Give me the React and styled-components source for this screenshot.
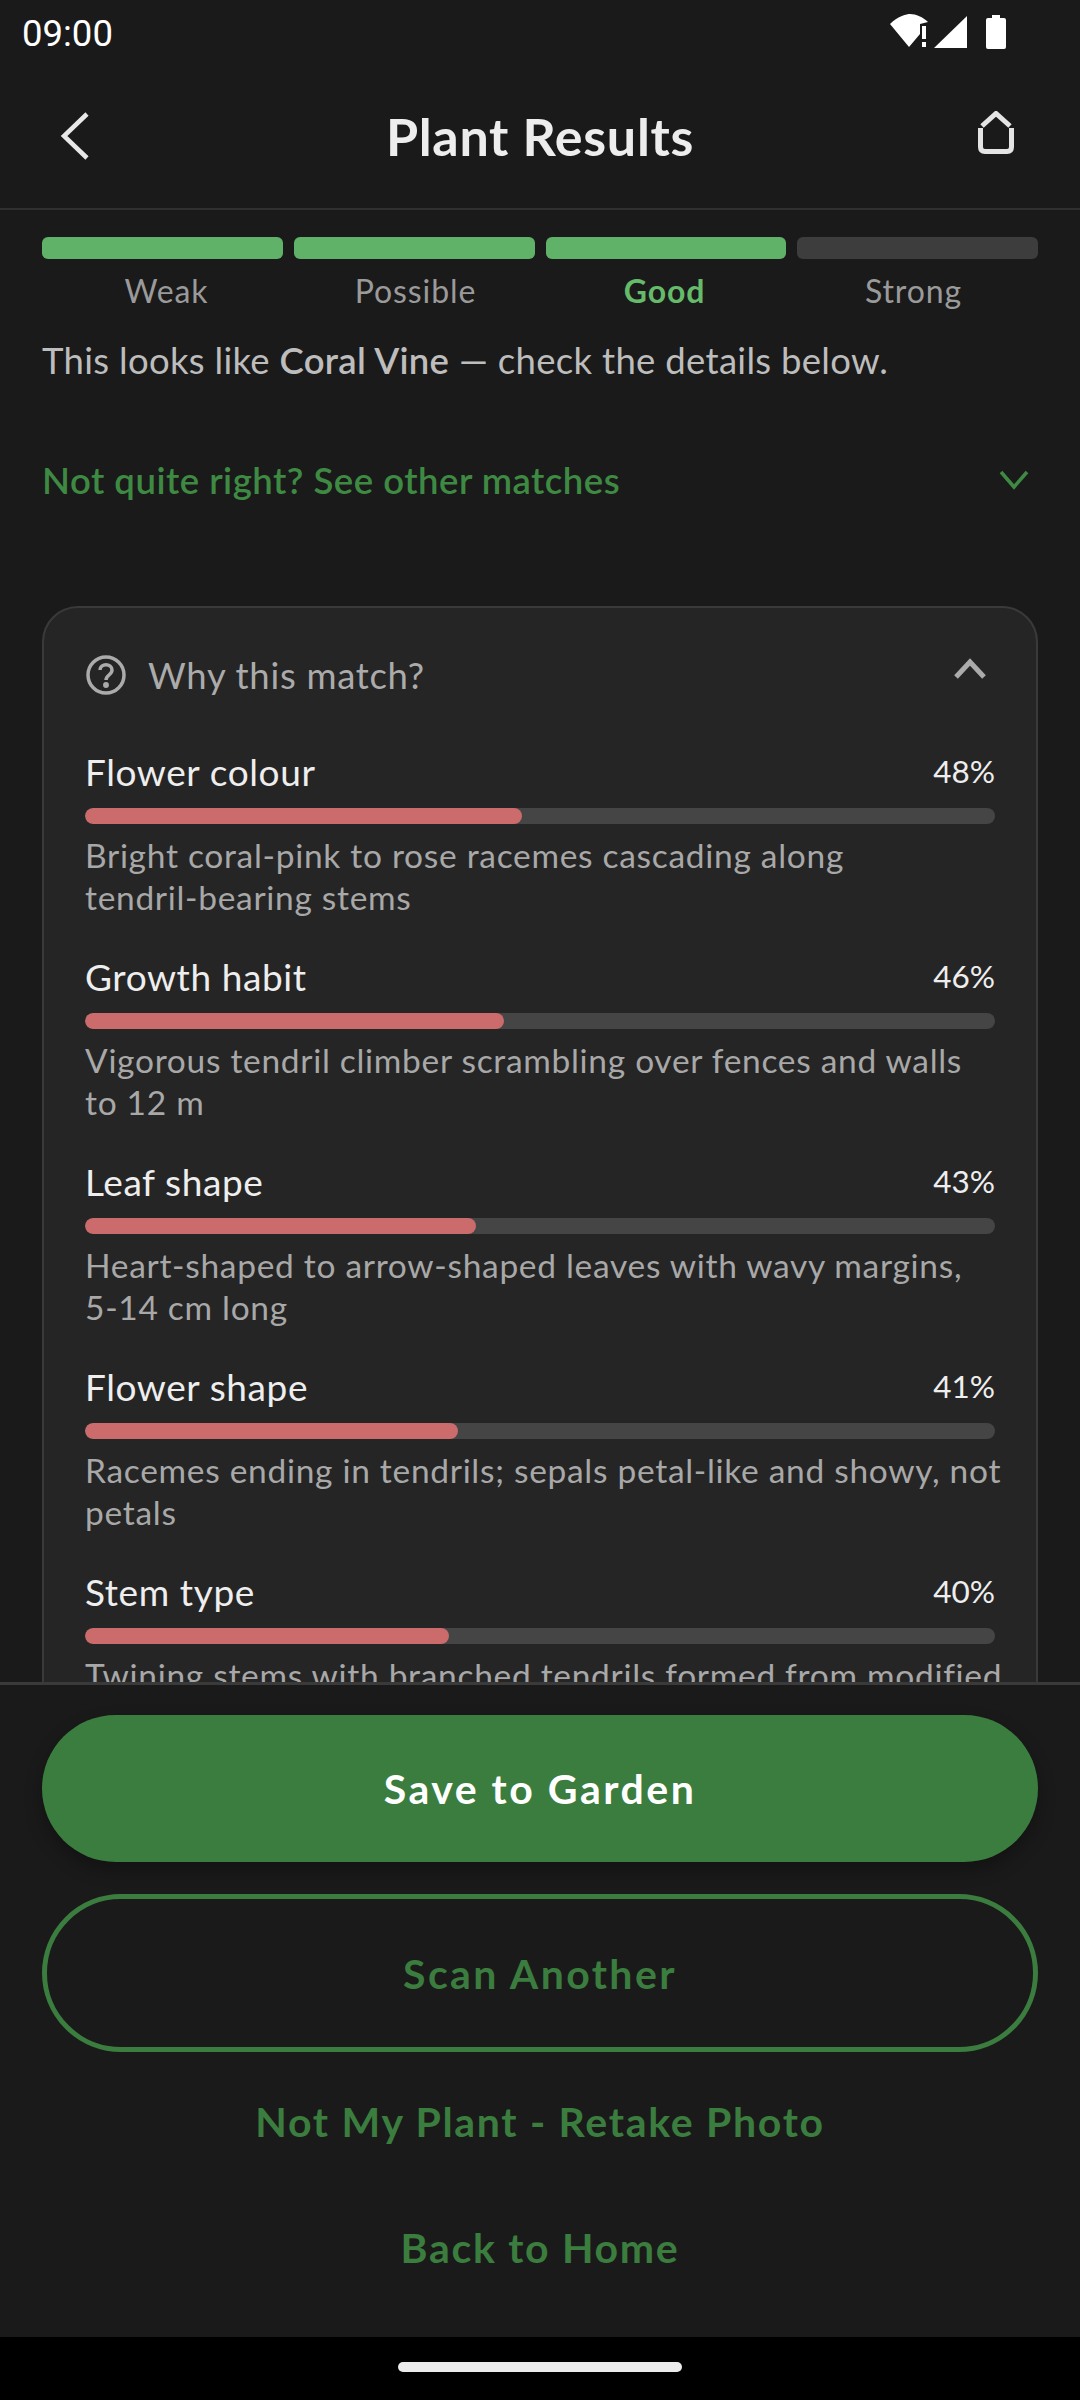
import React from 'react'
import styled, { createGlobalStyle } from 'styled-components'

const GlobalStyle = createGlobalStyle`
   * { box-sizing: border-box; }
   html, body { margin: 0; padding: 0; background: #1a1a1a; }
   body { font-family: "Lato", "Open Sans", sans-serif; }
`

const Screen = styled.div`
   display: flex;
   flex-direction: column;
   width: 1080px;
   height: 2400px;
   overflow: hidden;
   background: #1a1a1a;
`

const StatusBar = styled.div`
   display: flex;
   justify-content: space-between;
   align-items: center;
   flex: 0 0 64px;
   padding: 2px 74px 0 22px;
   color: #fff;
   font-family: "Roboto", sans-serif;
   font-size: 36.5px;
`

const StatusIcons = styled.div`
   display: flex;
   align-items: center;
   margin-top: -2px;
`

const Header = styled.header`
   display: grid;
   grid-template-columns: 1fr auto 1fr;
   align-items: center;
   flex: 0 0 146px;
   padding: 0 66px;
   border-bottom: 2px solid #303030;
`

const Title = styled.h1`
   margin: 0;
   color: #ededed;
   font-size: 52px;
   font-weight: 700;
   letter-spacing: 0.7px;
`

const BackIcon = styled.svg`
   display: block;
   justify-self: start;
   margin-left: -6px;
   fill: none;
   stroke: #e8e8e8;
`

const HomeIcon = styled.svg`
   display: block;
   justify-self: end;
   margin-top: -7px;
   fill: none;
   stroke: #e4e4e4;
`

const Content = styled.main`
   flex: 1;
   min-height: 0;
   overflow: hidden;
   padding: 27px 42px 0;
`

const StrengthBars = styled.div`
   display: grid;
   grid-template-columns: repeat(4, 1fr);
   column-gap: 11px;
`

const StrengthBar = styled.div`
   height: 22px;
   border-radius: 6px;
   background: ${p => (p.$on ? '#5fb267' : '#3d3d3d')};
`

const StrengthLabels = styled.div`
   display: grid;
   grid-template-columns: repeat(4, 1fr);
   margin-top: 12px;
`

const StrengthLabel = styled.div`
   color: ${p => (p.$active ? '#66bb6a' : '#9a9a9a')};
   font-size: 32px;
   font-weight: ${p => (p.$active ? 700 : 400)};
   letter-spacing: 0.9px;
   line-height: 40px;
   text-align: center;
`

const Summary = styled.p`
   margin: 25px 0 0;
   color: #bdbdbd;
   font-size: 36.5px;
   letter-spacing: 0.3px;
   line-height: 48px;

   strong {
      font-weight: 600;
   }
`

const OtherMatches = styled.div`
   display: flex;
   justify-content: space-between;
   align-items: center;
   height: 60px;
   margin-top: 66px;
   padding-right: 9px;
   color: #3e8a43;
   font-size: 36.5px;
   font-weight: 600;
   letter-spacing: 0.5px;
`

const Card = styled.section`
   margin-top: 96px;
   padding: 0 41px;
   border: 2px solid #3a3a3a;
   border-radius: 36px;
   background: #252525;
`

const CardHead = styled.div`
   display: flex;
   align-items: center;
   gap: 22px;
   height: 141px;
   padding: 0 0 7px 1px;
   color: #ababab;
   font-size: 36.5px;
   letter-spacing: 0.7px;
`

const CardHeadLabel = styled.span`
   flex: 1;
`

const Factor = styled.div`
   padding-bottom: 36px;
`

const FactorTop = styled.div`
   display: flex;
   justify-content: space-between;
   align-items: center;
   height: 44px;
   color: #eeeeee;
   font-size: 37px;
   letter-spacing: 0.6px;
`

const FactorPct = styled.span`
   font-size: 31.5px;
   letter-spacing: 0;
`

const Track = styled.div`
   height: 16px;
   margin-top: 15px;
   border-radius: 8px;
   background: #454545;
   overflow: hidden;
`

const Fill = styled.div`
   height: 100%;
   border-radius: 8px;
   background: #cb6b6b;
`

const FactorText = styled.p`
   margin: 11px 0 0;
   color: #a8a8a8;
   font-size: 33.5px;
   letter-spacing: 0.7px;
   line-height: 41.5px;
`

const FactorLine = styled.span`
   display: block;
   white-space: nowrap;
`

const Footer = styled.footer`
   display: flex;
   flex-direction: column;
   flex: 0 0 655px;
   padding: 30px 42px 0;
   border-top: 3px solid #3a3a3a;
   background: #1a1a1a;
`

const PrimaryButton = styled.button`
   height: 147px;
   border: 0;
   border-radius: 74px;
   background: #3a7d3e;
   box-shadow: 0 8px 18px rgba(0, 0, 0, 0.3);
   color: #fff;
   font-family: inherit;
   font-size: 41px;
   font-weight: 700;
   letter-spacing: 2.5px;
`

const OutlineButton = styled.button`
   height: 158px;
   margin-top: 32px;
   border: 5px solid #3a7d3e;
   border-radius: 79px;
   background: transparent;
   color: #3a7d3e;
   font-family: inherit;
   font-size: 41px;
   font-weight: 700;
   letter-spacing: 2.4px;
`

const TextButton = styled.button`
   height: 100px;
   margin-top: ${p => p.$gap}px;
   border: 0;
   background: transparent;
   color: #3a7d3e;
   font-family: inherit;
   font-size: 41px;
   font-weight: 700;
   letter-spacing: 1.7px;
`

const NavBar = styled.div`
   display: flex;
   justify-content: center;
   align-items: center;
   flex: 0 0 63px;
   padding-bottom: 4px;
   background: #000;
`

const NavHandle = styled.div`
   width: 284px;
   height: 10px;
   border-radius: 5px;
   background: #ececec;
`

const factors = [
   { name: 'Flower colour', pct: 48, lines: ['Bright coral-pink to rose racemes cascading along', 'tendril-bearing stems'] },
   { name: 'Growth habit', pct: 46, lines: ['Vigorous tendril climber scrambling over fences and walls', 'to 12 m'] },
   { name: 'Leaf shape', pct: 43, lines: ['Heart-shaped to arrow-shaped leaves with wavy margins,', '5-14 cm long'] },
   { name: 'Flower shape', pct: 41, lines: ['Racemes ending in tendrils; sepals petal-like and showy, not', 'petals'] },
   { name: 'Stem type', pct: 40, lines: ['Twining stems with branched tendrils formed from modified', 'flower stalks'] },
]

const levels = ['Weak', 'Possible', 'Good', 'Strong']

const Wifi = () => (
   <svg width="44" height="36" viewBox="0 0 44 36">
      <path d="M0 10 C8 2 17 0 20 0 C26 0 33 3 38 8 L30 10 L30 20 L19 33 Z" fill="#fff" />
      <rect x="32" y="12" width="4" height="13" fill="#fff" />
      <rect x="32" y="28" width="4" height="5" fill="#fff" />
   </svg>
)

const Signal = () => (
   <svg width="34" height="34" viewBox="0 0 34 34">
      <path d="M0 33 L33 1 L33 33 Z" fill="#fff" />
   </svg>
)

const Battery = () => (
   <svg width="20" height="36" viewBox="0 0 20 36" style={{ marginLeft: 18 }}>
      <path d="M6 1 H14 V4 H18 Q20 4 20 6 V33 Q20 35 18 35 H2 Q0 35 0 33 V6 Q0 4 2 4 H6 Z" fill="#fff" />
   </svg>
)

const App = () => {
   return (
      <Screen>
         <GlobalStyle />
         <StatusBar>
            <span>09:00</span>
            <StatusIcons>
               <Wifi />
               <Signal />
               <Battery />
            </StatusIcons>
         </StatusBar>

         <Header>
            <BackIcon width="30" height="50" viewBox="0 0 30 50" strokeWidth="4.5">
               <path d="M27 3 L4 25 L27 47" />
            </BackIcon>
            <Title>Plant Results</Title>
            <HomeIcon width="36" height="43" viewBox="0 0 36 43" strokeWidth="5">
               <path d="M4 15 L18 2.5 L32 15" />
               <path d="M2.5 17 V36 Q2.5 40.5 7 40.5 H29 Q33.5 40.5 33.5 36 V17" />
            </HomeIcon>
         </Header>

         <Content>
            <StrengthBars>
               {levels.map((l, i) => <StrengthBar key={l} $on={i < 3} />)}
            </StrengthBars>
            <StrengthLabels>
               {levels.map(l => <StrengthLabel key={l} $active={l === 'Good'}>{l}</StrengthLabel>)}
            </StrengthLabels>
            <Summary>This looks like <strong>Coral Vine</strong> — check the details below.</Summary>
            <OtherMatches>
               <span>Not quite right? See other matches</span>
               <svg width="30" height="20" viewBox="0 0 30 20" fill="none" stroke="#3e8a43" strokeWidth="3.5">
                  <path d="M2 2 L15 17 L28 2" />
               </svg>
            </OtherMatches>

            <Card>
               <CardHead>
                  <svg width="40" height="40" viewBox="0 0 40 40" fill="none" stroke="#ababab" strokeWidth="3.5">
                     <circle cx="20" cy="20" r="18" />
                     <path d="M14 15 C14 8 26 8 26 15 C26 20 20 20 20 25" />
                     <circle cx="20" cy="30" r="1.2" fill="#ababab" />
                  </svg>
                  <CardHeadLabel>Why this match?</CardHeadLabel>
                  <svg width="32" height="22" viewBox="0 0 32 22" fill="none" stroke="#ababab" strokeWidth="5" style={{ marginRight: 9, marginTop: -12 }}>
                     <path d="M2 19 L16 4 L30 19" />
                  </svg>
               </CardHead>
               {factors.map(f => (
                  <Factor key={f.name}>
                     <FactorTop>
                        <span>{f.name}</span>
                        <FactorPct>{f.pct}%</FactorPct>
                     </FactorTop>
                     <Track>
                        <Fill style={{ width: `${f.pct}%` }} />
                     </Track>
                     <FactorText>
                        {f.lines.map(line => <FactorLine key={line}>{line}</FactorLine>)}
                     </FactorText>
                  </Factor>
               ))}
            </Card>
         </Content>

         <Footer>
            <PrimaryButton>Save to Garden</PrimaryButton>
            <OutlineButton>Scan Another</OutlineButton>
            <TextButton $gap={19}>Not My Plant - Retake Photo</TextButton>
            <TextButton $gap={26}>Back to Home</TextButton>
         </Footer>

         <NavBar>
            <NavHandle />
         </NavBar>
      </Screen>
   )
}

export default App
